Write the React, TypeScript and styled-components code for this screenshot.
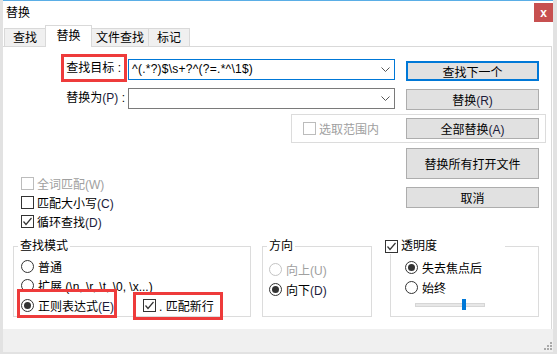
import React from 'react'
import styled, { createGlobalStyle } from 'styled-components'

const GlobalStyle = createGlobalStyle`
  * { box-sizing: border-box; }
  html, body { margin: 0; padding: 0; }
  body {
    background: #e2e2e2;
    font-family: 'Liberation Sans', 'Noto Sans CJK SC', sans-serif;
    font-size: 12px;
    color: #000;
  }
`

const Dialog = styled.div`
  margin-left: 3px;
  width: 550px;
  height: 352px;
  background: #fff;
  border-top: 1px solid #5aaee6;
  display: flex;
  flex-direction: column;
`

const TitleBar = styled.div`
  height: 24px;
  display: flex;
  align-items: flex-start;
  padding-left: 3px;
`

const Title = styled.span`
  margin-top: 4px;
  line-height: 16px;
`

const CloseButton = styled.div`
  margin-left: auto;
  margin-top: 2px;
  width: 19px;
  height: 19px;
  background: #c75050;
  color: #fff;
  font-weight: bold;
  font-size: 12px;
  line-height: 1;
  display: flex;
  align-items: center;
  justify-content: center;
`

const TabStrip = styled.div`
  height: 21px;
  display: flex;
  align-items: flex-end;
  padding-left: 1px;
  position: relative;
  z-index: 1;
`

const Tab = styled.div<{ $active?: boolean; $w: number }>`
  width: ${({ $w }) => $w}px;
  height: ${({ $active }) => ($active ? 22 : 18)}px;
  margin-bottom: ${({ $active }) => ($active ? -1 : 0)}px;
  margin-right: -1px;
  padding-bottom: ${({ $active }) => ($active ? 2 : 0)}px;
  background: ${({ $active }) => ($active ? '#fff' : '#f0f0f0')};
  border: 1px solid #d9d9d9;
  border-bottom: none;
  position: relative;
  z-index: ${({ $active }) => ($active ? 2 : 1)};
  display: flex;
  align-items: center;
  justify-content: center;
  line-height: 16px;
`

const Panel = styled.div`
  height: 283px;
  margin-right: 1px;
  border-top: 1px solid #d9d9d9;
  border-right: 1px solid #d9d9d9;
  padding-top: 7px;
  display: flex;
  flex-direction: column;
`

const FieldRow = styled.div<{ $mt?: number }>`
  display: flex;
  align-items: flex-start;
  margin-top: ${({ $mt }) => $mt ?? 0}px;
`

const LabelCell = styled.div`
  width: 124px;
  display: flex;
  justify-content: flex-end;
`

const FieldLabel = styled.div<{ $marked?: boolean }>`
  width: ${({ $marked }) => ($marked ? '66px' : 'auto')};
  height: ${({ $marked }) => ($marked ? 28 : 21)}px;
  line-height: ${({ $marked }) => ($marked ? 22 : 21)}px;
  border: ${({ $marked }) => ($marked ? '3px solid #ee3b3b' : 'none')};
  padding: ${({ $marked }) => ($marked ? '0 3px 0 0' : '0 2px 0 0')};
  text-align: right;
  white-space: nowrap;
`

const Combo = styled.div<{ $focused?: boolean; $mt?: number }>`
  margin-left: 1px;
  margin-top: ${({ $mt }) => $mt ?? 0}px;
  width: 267px;
  height: 21px;
  border: 1px solid ${({ $focused }) => ($focused ? '#0078d7' : '#7a7a7a')};
  display: flex;
  align-items: center;
  padding-left: 3px;
`

const ComboText = styled.span`
  flex: 1;
  white-space: nowrap;
  line-height: 19px;
  letter-spacing: 0.25px;
`

const ComboArrow = styled.span`
  width: 17px;
  display: flex;
  align-items: center;
  justify-content: center;
`

const Button = styled.div<{ $default?: boolean; $h?: number; $mt?: number; $ml?: number }>`
  width: 133px;
  height: ${({ $h }) => $h ?? 21}px;
  margin-top: ${({ $mt }) => $mt ?? 0}px;
  margin-left: ${({ $ml }) => $ml ?? 0}px;
  background: #e1e1e1;
  border: ${({ $default }) => ($default ? '2px solid #0078d7' : '1px solid #adadad')};
  display: flex;
  align-items: center;
  justify-content: center;
  white-space: nowrap;
`

const SelectionBox = styled.div`
  margin-left: 288px;
  width: 255px;
  height: 29px;
  border: 1px solid #dcdcdc;
  display: flex;
  align-items: center;
  justify-content: space-between;
  padding: 0 6px 0 11px;
`

const OptionsArea = styled.div`
  display: flex;
  align-items: flex-start;
`

const OptionList = styled.div`
  margin-left: 18px;
  padding-top: 31px;
  display: flex;
  flex-direction: column;
`

const ButtonStack = styled.div`
  margin-left: auto;
  margin-right: 12px;
  padding-top: 5px;
  display: flex;
  flex-direction: column;
  gap: 8px;
`

const Option = styled.div<{ $disabled?: boolean; $h?: number }>`
  height: ${({ $h }) => $h ?? 19}px;
  display: flex;
  align-items: center;
  gap: 3px;
  white-space: nowrap;
  color: ${({ $disabled }) => ($disabled ? '#a0a0a0' : '#000')};
`

const Box = styled.span<{ $disabled?: boolean }>`
  width: 13px;
  height: 13px;
  flex: none;
  border: 1px solid ${({ $disabled }) => ($disabled ? '#bcbcbc' : '#333')};
  background: #fff;
  display: flex;
  align-items: center;
  justify-content: center;
`

const Circle = styled.span<{ $disabled?: boolean }>`
  width: 13px;
  height: 13px;
  flex: none;
  margin-right: 1px;
  border-radius: 50%;
  border: 1px solid ${({ $disabled }) => ($disabled ? '#c4c4c4' : '#333')};
  background: #fff;
  display: flex;
  align-items: center;
  justify-content: center;
`

const Dot = styled.span`
  width: 7px;
  height: 7px;
  border-radius: 50%;
  background: #333;
`

const GroupRow = styled.div`
  margin-top: 15px;
  display: flex;
  align-items: flex-start;
`

const GroupBox = styled.div<{ $w: number; $ml: number; $pt: number; $pl: number }>`
  position: relative;
  width: ${({ $w }) => $w}px;
  height: 71px;
  margin-left: ${({ $ml }) => $ml}px;
  padding: ${({ $pt }) => $pt}px 0 0 ${({ $pl }) => $pl}px;
  border: 1px solid #dcdcdc;
  display: flex;
  flex-direction: column;
`

const Caption = styled.div<{ $x: number; $w?: number }>`
  position: absolute;
  top: -9px;
  left: ${({ $x }) => $x}px;
  width: ${({ $w }) => ($w ? `${$w}px` : 'auto')};
  height: 16px;
  line-height: 16px;
  padding: 0 2px;
  background: #fff;
  display: flex;
  align-items: center;
  gap: 3px;
  white-space: nowrap;
`

const ModeRow = styled.div`
  height: 20px;
  display: grid;
  grid-template-columns: 122px auto;
  justify-items: start;
  align-items: center;
`

const Marked = styled.div<{ $inset: string }>`
  position: relative;
  display: inline-flex;
  &::after {
    content: '';
    position: absolute;
    inset: ${({ $inset }) => $inset};
    border: 3px solid #ee3b3b;
    pointer-events: none;
  }
`

const Slider = styled.div`
  position: relative;
  margin: 1px 0 0 10px;
  width: 70px;
  height: 13px;
  display: flex;
  align-items: center;
`

const SliderTrack = styled.div`
  width: 100%;
  height: 4px;
  background: #e7e7e7;
  border: 1px solid #d6d6d6;
`

const SliderThumb = styled.div`
  position: absolute;
  left: 47px;
  top: 1px;
  width: 4px;
  height: 11px;
  background: #0078d7;
`

const StatusBar = styled.div`
  height: 23px;
  background: #f0f0f0;
  display: flex;
  justify-content: flex-end;
  align-items: flex-end;
  padding: 0 1px 2px 0;
`

const Mn = styled.span`
  color: #1b1b3a;
`

const Chevron = () => (
  <svg width="9" height="5" viewBox="0 0 9 5">
    <polyline points="0.5,0.5 4.5,4.5 8.5,0.5" fill="none" stroke="#555" strokeWidth="1" />
  </svg>
)

const Check = () => (
  <svg width="11" height="11" viewBox="0 0 11 11">
    <polyline points="1.5,5.5 4,8.5 9.5,2" fill="none" stroke="#333" strokeWidth="1.2" />
  </svg>
)

const CheckBox = ({ checked, disabled }: { checked?: boolean; disabled?: boolean }) => (
  <Box $disabled={disabled}>{checked && <Check />}</Box>
)

const RadioButton = ({ checked, disabled }: { checked?: boolean; disabled?: boolean }) => (
  <Circle $disabled={disabled}>{checked && <Dot />}</Circle>
)

const Grip = () => (
  <svg width="8" height="8" viewBox="0 0 8 8" fill="#a9a9a9">
    <rect x="6" y="0" width="2" height="2" />
    <rect x="3" y="3" width="2" height="2" />
    <rect x="6" y="3" width="2" height="2" />
    <rect x="0" y="6" width="2" height="2" />
    <rect x="3" y="6" width="2" height="2" />
    <rect x="6" y="6" width="2" height="2" />
  </svg>
)

const tabs = [
  { label: '查找', w: 42 },
  { label: '替换', w: 47, active: true },
  { label: '文件查找', w: 58 },
  { label: '标记', w: 42 },
]

const App: React.FC = () => {
  return (
    <>
      <GlobalStyle />
      <Dialog>
        <TitleBar>
          <Title>替换</Title>
          <CloseButton>x</CloseButton>
        </TitleBar>

        <TabStrip>
          {tabs.map((t) => (
            <Tab key={t.label} $w={t.w} $active={t.active}>
              {t.label}
            </Tab>
          ))}
        </TabStrip>

        <Panel>
          <FieldRow>
            <LabelCell>
              <FieldLabel $marked>查找目标 :</FieldLabel>
            </LabelCell>
            <Combo $focused $mt={5}>
              <ComboText>^(.*?)$\s+?^(?=.*^\1$)</ComboText>
              <ComboArrow>
                <Chevron />
              </ComboArrow>
            </Combo>
            <Button $default $mt={7} $ml={11} $h={20}>
              查找下一个
            </Button>
          </FieldRow>

          <FieldRow $mt={6}>
            <LabelCell>
              <FieldLabel>
                替换为<Mn>(P)</Mn> :
              </FieldLabel>
            </LabelCell>
            <Combo>
              <ComboText />
              <ComboArrow>
                <Chevron />
              </ComboArrow>
            </Combo>
            <Button $mt={1} $ml={11}>
              <span>
                替换<Mn>(R)</Mn>
              </span>
            </Button>
          </FieldRow>

          <FieldRow $mt={4}>
            <SelectionBox>
              <Option $disabled>
                <CheckBox disabled />
                <span>选取范围内</span>
              </Option>
              <Button>
                <span>
                  全部替换<Mn>(A)</Mn>
                </span>
              </Button>
            </SelectionBox>
          </FieldRow>

          <OptionsArea>
            <OptionList>
              <Option $disabled>
                <CheckBox disabled />
                <span>全词匹配(W)</span>
              </Option>
              <Option>
                <CheckBox />
                <span>
                  匹配大小写<Mn>(C)</Mn>
                </span>
              </Option>
              <Option>
                <CheckBox checked />
                <span>
                  循环查找<Mn>(D)</Mn>
                </span>
              </Option>
            </OptionList>
            <ButtonStack>
              <Button $h={31}>替换所有打开文件</Button>
              <Button>取消</Button>
            </ButtonStack>
          </OptionsArea>

          <GroupRow>
            <GroupBox $w={238} $ml={10} $pt={10} $pl={7}>
              <Caption $x={4}>查找模式</Caption>
              <Option>
                <RadioButton />
                <span>普通</span>
              </Option>
              <Option>
                <RadioButton />
                <span>扩展 (\n, \r, \t, \0, \x...)</span>
              </Option>
              <ModeRow>
                <Marked $inset="-6px -3px -3px -4px">
                  <Option $h={20}>
                    <RadioButton checked />
                    <span>
                      正则表达式<Mn>(E)</Mn>
                    </span>
                  </Option>
                </Marked>
                <Marked $inset="-3px -9px -5px -10px">
                  <Option $h={20}>
                    <CheckBox checked />
                    <span>. 匹配新行</span>
                  </Option>
                </Marked>
              </ModeRow>
            </GroupBox>

            <GroupBox $w={110} $ml={11} $pt={12} $pl={6}>
              <Caption $x={4}>方向</Caption>
              <Option $disabled $h={20}>
                <RadioButton disabled />
                <span>向上(U)</span>
              </Option>
              <Option $h={20}>
                <RadioButton checked />
                <span>
                  向下<Mn>(D)</Mn>
                </span>
              </Option>
            </GroupBox>

            <GroupBox $w={149} $ml={18} $pt={10} $pl={14}>
              <Caption $x={-8} $w={122}>
                <CheckBox checked />
                <span>透明度</span>
              </Caption>
              <Option $h={20}>
                <RadioButton checked />
                <span>失去焦点后</span>
              </Option>
              <Option $h={20}>
                <RadioButton />
                <span>始终</span>
              </Option>
              <Slider>
                <SliderTrack />
                <SliderThumb />
              </Slider>
            </GroupBox>
          </GroupRow>
        </Panel>

        <StatusBar>
          <Grip />
        </StatusBar>
      </Dialog>
    </>
  )
}

export default App
